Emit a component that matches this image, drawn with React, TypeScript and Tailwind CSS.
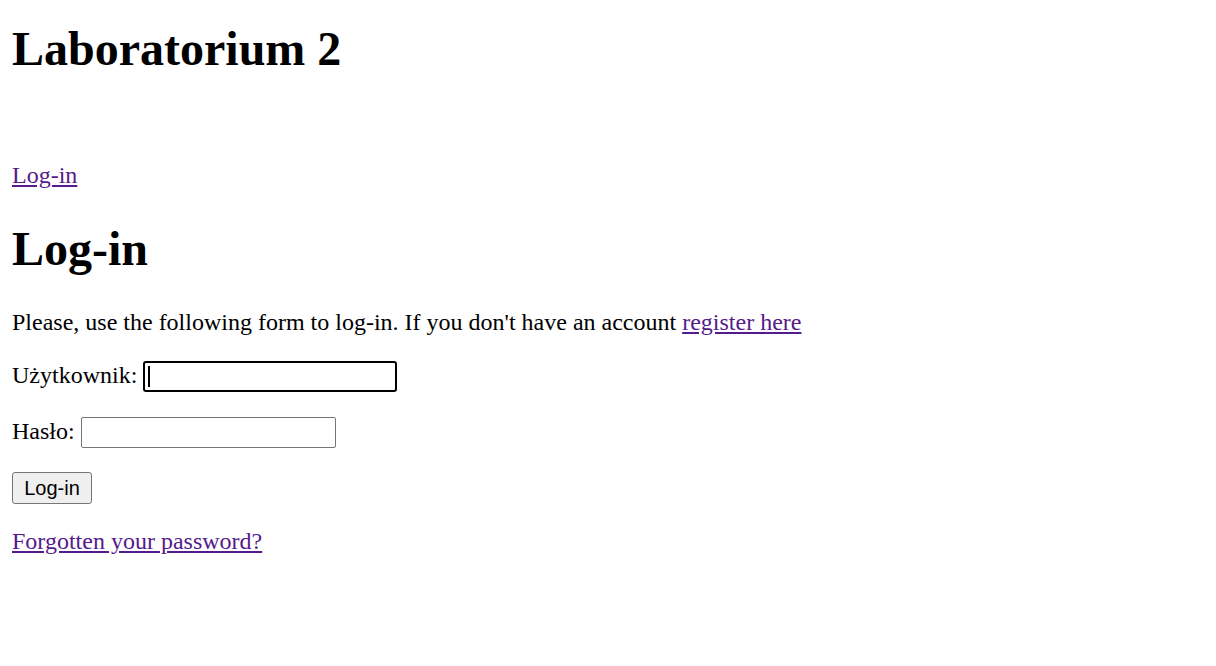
export default function App() {
  return (
    <div className="min-h-screen bg-white px-[12px] text-[24px] text-black font-['Liberation_Serif','Times_New_Roman',serif]">
      <h1 className="mt-[21px] text-[48px] font-bold leading-[55px]">Laboratorium 2</h1>

      <div className="mt-[85px] leading-[28px]">
        <a href="#" className="text-[#551a8b] underline">
          Log-in
        </a>
      </div>

      <h1 className="mt-[32px] text-[48px] font-bold leading-[55px]">Log-in</h1>

      <p className="mt-[32px] leading-[28px]">
        Please, use the following form to log-in. If you don't have an account{" "}
        <a href="#" className="text-[#551a8b] underline">
          register here
        </a>
      </p>

      <form onSubmit={(e) => e.preventDefault()}>
        <div className="mt-[25px] flex items-start gap-[6px] leading-[28px]">
          <label htmlFor="username">Użytkownik:</label>
          <div className="relative">
            <input
              id="username"
              type="text"
              className="block h-[31px] w-[254px] rounded-[3px] border-2 border-black bg-white px-[3px] outline-none"
            />
            <span className="absolute left-[5px] top-[5px] h-[21px] w-[2px] bg-black" />
          </div>
        </div>

        <div className="mt-[25px] flex items-start gap-[6px] leading-[28px]">
          <label htmlFor="password">Hasło:</label>
          <input
            id="password"
            type="password"
            className="block h-[31px] w-[255px] rounded-[2px] border border-[#767676] bg-white px-[3px] outline-none"
          />
        </div>

        <div className="mt-[24px]">
          <button
            type="submit"
            className="block h-[32px] w-[80px] rounded-[3px] border border-[#767676] bg-[#efefef] text-[20px] leading-[23px] font-['Liberation_Sans',Arial,sans-serif]"
          >
            Log-in
          </button>
        </div>
      </form>

      <div className="mt-[23px] leading-[28px]">
        <a href="#" className="text-[#551a8b] underline">
          Forgotten your password?
        </a>
      </div>
    </div>
  );
}
